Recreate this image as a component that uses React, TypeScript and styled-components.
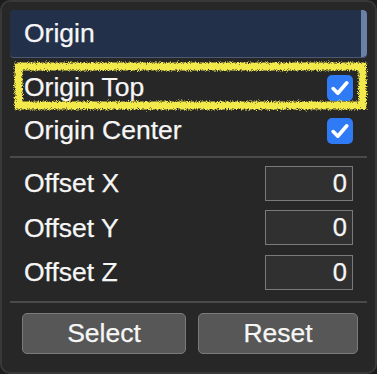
import React from "react";
import styled, { createGlobalStyle } from "styled-components";

const Global = createGlobalStyle`
  html, body { margin: 0; padding: 0; background: #1c1c1c; }
  body { font-family: "Liberation Sans", Arial, Helvetica, sans-serif; }
  * { box-sizing: border-box; }
`;

const Panel = styled.div`
  width: 377px;
  height: 374px;
  background: #272727;
  border: 2px solid #383838;
  border-radius: 10px;
  padding: 8px 8px 0 8px;
  display: flex;
  flex-direction: column;
  color: #f6f6f6;
  font-size: 26.5px;
  -webkit-text-stroke: 0.25px #f6f6f6;
`;

const Header = styled.div`
  height: 48px;
  background: #23304a;
  border-radius: 4px;
  border-bottom: 1px solid #4b5a72;
  display: flex;
  align-items: center;
  padding-left: 14px;
  position: relative;
  overflow: hidden;
`;

const ScrollStrip = styled.div`
  position: absolute;
  right: 0;
  top: 0;
  bottom: 0;
  width: 6px;
  background: #6b80a6;
  border-radius: 0 4px 4px 0;
`;

const Row = styled.div<{ $h?: number }>`
  position: relative;
  height: ${(p) => p.$h ?? 43}px;
  display: flex;
  align-items: center;
  justify-content: space-between;
  padding: 0 14px;
`;

const Label = styled.span`
  line-height: 1;
`;

const Check = styled.span`
  width: 26px;
  height: 26px;
  border-radius: 5px;
  background: #2f7bf5;
  display: inline-flex;
  align-items: center;
  justify-content: center;
`;

const Divider = styled.div<{ $mt: number; $mb: number }>`
  height: 2px;
  background: #4a4a4a;
  margin: ${(p) => p.$mt}px 0 ${(p) => p.$mb}px 0;
`;

const NumInput = styled.div`
  width: 88px;
  height: 35px;
  background: #303030;
  border: 1px solid #7a7a7a;
  display: flex;
  align-items: center;
  justify-content: flex-end;
  padding-right: 5px;
  font-size: 25.5px;
`;

const ButtonRow = styled.div`
  display: grid;
  grid-template-columns: 164px 160px;
  gap: 12px;
  padding: 0 0 0 12px;
`;

const Button = styled.button`
  height: 41px;
  background: #575757;
  border: 1px solid #7b7b7b;
  border-radius: 5px;
  color: #f6f6f6;
  font-family: "Liberation Sans", Arial, sans-serif;
  font-size: 26.5px;
  -webkit-text-stroke: 0.25px #f6f6f6;
  padding: 0;
`;

const Highlight = styled.svg`
  position: absolute;
  left: 4px;
  top: -4px;
  width: 353px;
  height: 48px;
  pointer-events: none;
  overflow: visible;
`;

const CheckMark = () => (
  <svg width="18" height="16" viewBox="0 0 18 16">
    <path d="M2.2 8.6 L6.8 13.2 L15.8 2.8" fill="none" stroke="#fff" strokeWidth="3.6" strokeLinecap="round" strokeLinejoin="round" />
  </svg>
);

export default function App() {
  return (
    <>
      <Global />
      <Panel>
        <Header>
          <Label>Origin</Label>
          <ScrollStrip />
        </Header>
        <Row style={{ marginTop: 8 }}>
          <Label>Origin Top</Label>
          <Check><CheckMark /></Check>
          <Highlight viewBox="0 0 353 48">
            <defs>
              <filter id="rough" x="-5%" y="-25%" width="110%" height="150%">
                <feTurbulence type="fractalNoise" baseFrequency="1.1" numOctaves="2" seed="5" />
                <feDisplacementMap in="SourceGraphic" scale="6" />
              </filter>
            </defs>
            <rect x="4.5" y="4.5" width="344" height="39" fill="none" stroke="#f2ea4c" strokeWidth="8" filter="url(#rough)" />
          </Highlight>
        </Row>
        <Row>
          <Label>Origin Center</Label>
          <Check><CheckMark /></Check>
        </Row>
        <Divider $mt={4} $mb={3} />
        <Row $h={44.5}>
          <Label>Offset X</Label>
          <NumInput>0</NumInput>
        </Row>
        <Row $h={44.5}>
          <Label>Offset Y</Label>
          <NumInput>0</NumInput>
        </Row>
        <Row $h={44.5}>
          <Label>Offset Z</Label>
          <NumInput>0</NumInput>
        </Row>
        <Divider $mt={6} $mb={10} />
        <ButtonRow>
          <Button>Select</Button>
          <Button>Reset</Button>
        </ButtonRow>
      </Panel>
    </>
  );
}
